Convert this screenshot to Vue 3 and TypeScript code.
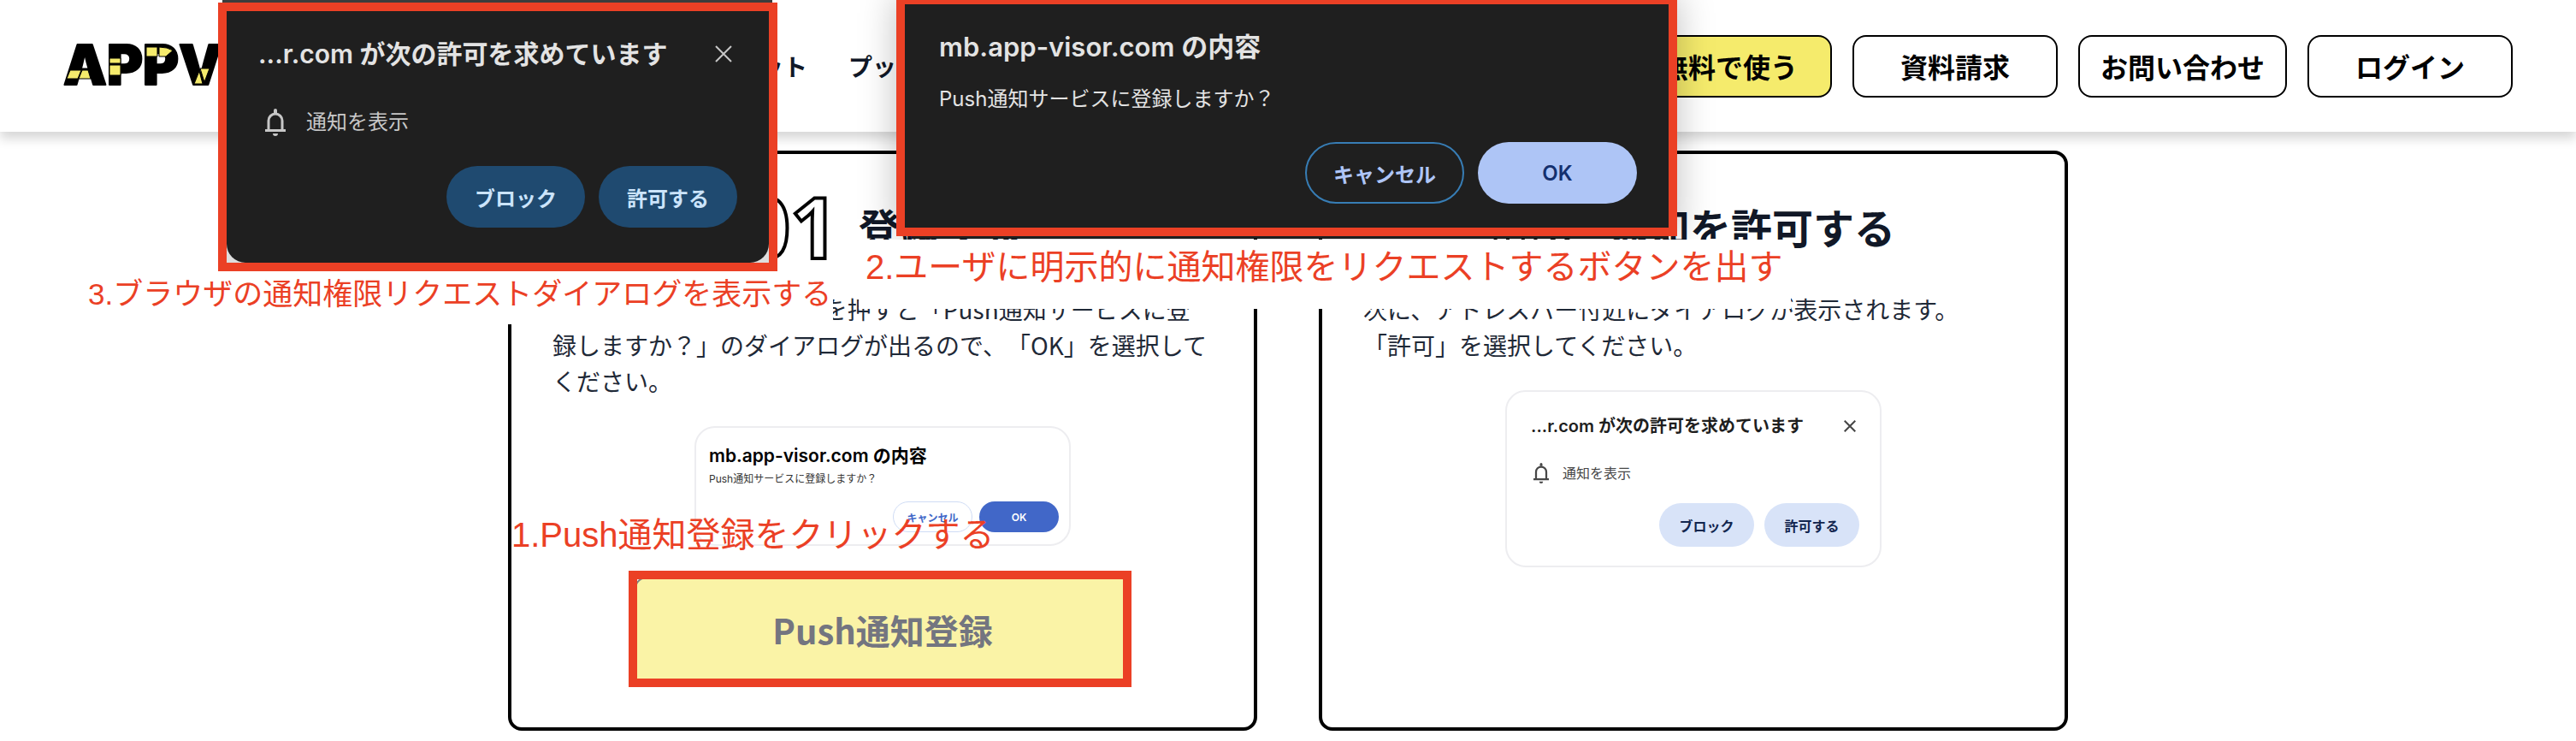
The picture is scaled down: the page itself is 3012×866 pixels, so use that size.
<script setup lang="ts">
interface NavItem {
  label: string
  href: string
}

interface HeaderAction extends NavItem {
  primary?: boolean
}

const navItems: NavItem[] = [
  { label: 'メリット', href: '#merit' },
  { label: 'プッシュ通知', href: '#push' },
]

const actions: HeaderAction[] = [
  { label: '無料で使う', href: '#free', primary: true },
  { label: '資料請求', href: '#document' },
  { label: 'お問い合わせ', href: '#contact' },
  { label: 'ログイン', href: '#login' },
]
</script>

<template>
  <div class="page">
    <header class="site-header">
      <a class="logo" href="#top" aria-label="APPVISOR">
        <svg width="344" height="56" viewBox="0 0 344 56" aria-hidden="true">
          <text x="0" y="50" class="logo-text">APPVISOR</text>
          <g fill="#f5eb6c" stroke="#000" stroke-width="1">
            <path d="M8 33h13l-4 10H4z" />
            <path d="M22 33h7l3 10H18z" />
            <path d="M54 19h13v6H54z" />
            <path d="M54 27h13v12H54z" />
            <path d="M97 6h13v11H97z" />
            <path d="M112 6q10 0 16 4l-8 7h-8z" />
            <path d="M153 49l6-15 4 15z" />
            <path d="M160 31h11l-6 16z" />
          </g>
        </svg>
      </a>
      <nav class="nav" aria-label="メイン">
        <a v-for="item in navItems" :key="item.label" :href="item.href">{{ item.label }}</a>
      </nav>
      <div class="actions">
        <a
          v-for="action in actions"
          :key="action.label"
          class="action"
          :class="{ primary: action.primary }"
          :href="action.href"
        >{{ action.label }}</a>
      </div>
    </header>

    <main class="steps">
      <section class="card">
        <h2 class="card-head"><span class="number">01</span><span>登録する</span></h2>
        <p class="card-text">「Push通知登録」ボタンを押すと「Push通知サービスに登録しますか？」のダイアログが出るので、「OK」を選択してください。</p>
        <div class="mini mini-confirm">
          <p class="mini-title">mb.app-visor.com の内容</p>
          <p class="mini-message">Push通知サービスに登録しますか？</p>
          <div class="mini-buttons">
            <button type="button" class="mini-cancel">キャンセル</button>
            <button type="button" class="mini-ok">OK</button>
          </div>
        </div>
        <div class="register">
          <button type="button" class="register-button">Push通知登録</button>
          <span class="mark"></span>
        </div>
        <p class="note note-one">1.Push通知登録をクリックする</p>
      </section>

      <section class="card">
        <h2 class="card-head"><span class="number">02</span><span>通知を許可する</span></h2>
        <p class="card-text">次に、アドレスバー付近にダイアログが表示されます。<br />「許可」を選択してください。</p>
        <div class="mini mini-permission">
          <div class="mini-row">
            <p class="mini-title">...r.com が次の許可を求めています</p>
            <button type="button" class="close" aria-label="閉じる">
              <svg width="14" height="14" viewBox="0 0 20 20"><path d="M1 1l18 18M19 1L1 19" fill="none" stroke="currentColor" stroke-width="3" /></svg>
            </button>
          </div>
          <p class="request">
            <svg width="18" height="24" viewBox="0 0 24 32" aria-hidden="true">
              <path d="M0 24h24v3H0z" fill="currentColor" />
              <path d="M4 25V14a8 8 0 0 1 16 0v11" fill="none" stroke="currentColor" stroke-width="3" />
              <path d="M10 5V2a2 2 0 0 1 4 0v3zM9 29h6a3 3 0 0 1-6 0z" fill="currentColor" />
            </svg>
            <span>通知を表示</span>
          </p>
          <div class="mini-buttons">
            <button type="button">ブロック</button>
            <button type="button">許可する</button>
          </div>
        </div>
      </section>
    </main>

    <section class="dialog confirm" aria-label="登録の確認">
      <p class="dialog-title">mb.app-visor.com の内容</p>
      <p class="dialog-message">Push通知サービスに登録しますか？</p>
      <div class="dialog-buttons">
        <button type="button" class="cancel">キャンセル</button>
        <button type="button" class="ok">OK</button>
      </div>
    </section>

    <section class="dialog permission" aria-label="通知の許可">
      <div class="dialog-body">
        <div class="dialog-row">
          <p class="dialog-title">...r.com が次の許可を求めています</p>
          <button type="button" class="close" aria-label="閉じる">
            <svg width="20" height="20" viewBox="0 0 20 20"><path d="M1 1l18 18M19 1L1 19" fill="none" stroke="currentColor" stroke-width="2" /></svg>
          </button>
        </div>
        <p class="request">
          <svg width="24" height="32" viewBox="0 0 24 32" aria-hidden="true">
            <path d="M0 24h24v3H0z" fill="currentColor" />
            <path d="M4 25V14a8 8 0 0 1 16 0v11" fill="none" stroke="currentColor" stroke-width="3" />
            <path d="M10 5V2a2 2 0 0 1 4 0v3zM9 29h6a3 3 0 0 1-6 0z" fill="currentColor" />
          </svg>
          <span>通知を表示</span>
        </p>
        <div class="dialog-buttons">
          <button type="button">ブロック</button>
          <button type="button">許可する</button>
        </div>
      </div>
    </section>

    <p class="note note-two">2.ユーザに明示的に通知権限をリクエストするボタンを出す</p>
    <p class="note note-three">3.ブラウザの通知権限リクエストダイアログを表示する</p>
  </div>
</template>

<style>
body {
  margin: 0;
  background: #fff;
}
</style>

<style scoped>
.page {
  position: relative;
  overflow: hidden;
  padding-bottom: 12px;
  color: #111827;
  font-family: "Noto Sans CJK JP", sans-serif;
  text-spacing-trim: space-all;
}

.page * {
  box-sizing: border-box;
}

p,
h2 {
  margin: 0;
}

a {
  color: inherit;
  text-decoration: none;
}

button {
  padding: 0;
  border: 0;
  background: none;
  color: inherit;
  font: inherit;
  cursor: pointer;
}

svg {
  display: block;
}

.site-header {
  display: flex;
  align-items: center;
  height: 154px;
  padding: 0 74px;
  box-shadow: 0 8px 12px rgba(0, 0, 0, 0.16);
}

.logo-text {
  font-family: Inter, sans-serif;
  font-size: 64px;
  font-weight: 900;
  fill: #000;
  stroke: #000;
  stroke-width: 2px;
  stroke-linejoin: round;
}

.nav {
  display: flex;
  gap: 48px;
  margin-left: 414px;
  font-size: 28px;
  font-weight: 700;
  white-space: nowrap;
}

.actions {
  display: flex;
  gap: 24px;
  margin-left: auto;
}

.action {
  display: flex;
  align-items: center;
  justify-content: center;
  min-width: 240px;
  height: 73px;
  padding: 0 24px;
  border: 2px solid #000;
  border-radius: 16px;
  color: #000;
  font-size: 32px;
  font-weight: 700;
  white-space: nowrap;
}

.action.primary {
  background: #f5eb6c;
}

.steps {
  display: grid;
  grid-template-columns: repeat(2, minmax(0, 1fr));
  gap: 72px;
  max-width: 1824px;
  margin: 22px auto 0;
}

.card {
  position: relative;
  display: flex;
  flex-direction: column;
  align-items: center;
  padding: 44px 48px 48px;
  border: 4px solid #000;
  border-radius: 16px;
}

.card-head {
  display: flex;
  align-items: center;
  gap: 24px;
  height: 80px;
  font-size: 48px;
  font-weight: 700;
  line-height: 72px;
  white-space: nowrap;
}

.number {
  color: #fff;
  font-family: "Open Sans", sans-serif;
  font-size: 98px;
  -webkit-text-stroke: 4px #000;
}

.card-text {
  align-self: stretch;
  margin-top: 36px;
  color: #1f2937;
  font-size: 28px;
  line-height: 42px;
}

.mini {
  width: 440px;
  max-width: 100%;
  margin-top: 32px;
  border: 2px solid #ededf0;
  border-radius: 24px;
  font-family: Inter, "Noto Sans CJK JP", sans-serif;
}

.mini-title {
  color: #1f1f1f;
  font-size: 20px;
  font-weight: 600;
  line-height: 30px;
  white-space: nowrap;
}

.mini-confirm {
  padding: 18px 12px 14px 15px;
}

.mini-confirm .mini-title {
  color: #000;
  font-size: 21px;
}

.mini-message {
  color: #333;
  font-size: 12px;
  line-height: 24px;
}

.mini-buttons {
  display: flex;
  justify-content: flex-end;
  gap: 8px;
}

.mini-confirm .mini-buttons {
  margin-top: 14px;
}

.mini-confirm button {
  width: 93px;
  height: 36px;
  border-radius: 18px;
  font-size: 12px;
  font-weight: 600;
}

.mini-confirm .mini-cancel {
  border: 1px solid #cfdcf5;
  color: #4167c8;
}

.mini-confirm .mini-ok {
  background: #4167c8;
  color: #fff;
}

.mini-permission {
  padding: 25px 24px 22px 28px;
}

.mini-row,
.dialog-row {
  display: flex;
  align-items: center;
  justify-content: space-between;
}

.mini-permission .close {
  margin-right: 4px;
  color: #474747;
}

.request {
  display: flex;
  align-items: center;
}

.mini-permission .request {
  gap: 16px;
  margin: 26px 0 21px 3px;
  color: #474747;
  font-size: 16px;
  line-height: 28px;
}

.mini-permission .mini-buttons {
  gap: 12px;
}

.mini-permission .mini-buttons button {
  width: 111px;
  height: 51px;
  border-radius: 26px;
  background: #d8e3f8;
  color: #13264f;
  font-size: 16px;
  font-weight: 600;
}

.register {
  position: relative;
  width: 580px;
  max-width: 100%;
  margin-top: 36px;
}

.register-button {
  width: 100%;
  height: 128px;
  padding-bottom: 4px;
  border: 2px solid #7f8080;
  border-radius: 14px;
  background: #faf3a6;
  color: #737580;
  font-size: 40px;
  font-weight: 700;
}

.mark {
  position: absolute;
  inset: -7px -1px -1px -7px;
  border: 10px solid #eb4025;
  pointer-events: none;
}

.dialog {
  position: absolute;
  border: 10px solid #eb4025;
  color: #e3e3e3;
  font-family: Inter, "Noto Sans CJK JP", sans-serif;
}

.dialog-title {
  font-size: 30px;
  font-weight: 600;
  line-height: 44px;
  white-space: nowrap;
}

.dialog-buttons {
  display: flex;
  justify-content: flex-end;
  gap: 16px;
}

.dialog-buttons button {
  height: 72px;
  border-radius: 36px;
  font-size: 24px;
  font-weight: 600;
}

.permission {
  top: 3px;
  left: 255px;
  width: 654px;
  height: 314px;
  background: #dedede;
}

.permission::before {
  content: "";
  position: absolute;
  top: -13px;
  left: -5px;
  right: -4px;
  height: 3px;
  background: #3c3c3c;
}

.dialog-body {
  height: 100%;
  padding: 28px 37px 0;
  border-radius: 0 0 22px 22px;
  background: #1f1f1f;
}

.permission .close {
  margin-right: 6px;
  color: #c7c7c7;
}

.permission .request {
  gap: 24px;
  margin: 40px 0 33px 8px;
  color: #c7c7c7;
  font-size: 24px;
  line-height: 36px;
}

.permission .dialog-buttons button {
  width: 162px;
  background: #1f4a70;
  color: #cbe4fb;
}

.confirm {
  top: -5px;
  left: 1048px;
  width: 913px;
  height: 281px;
  padding: 28px 37px 0 40px;
  background: #1f1f1f;
  box-shadow: 0 0 40px rgba(0, 0, 0, 0.25);
}

.confirm::after {
  content: "";
  position: absolute;
  right: 0;
  bottom: -13px;
  left: 8px;
  height: 3px;
  background: #1f1f1f;
}

.confirm .dialog-title {
  font-size: 31px;
}

.dialog-message {
  margin-top: 21px;
  font-size: 24px;
  line-height: 36px;
}

.confirm .dialog-buttons {
  margin-top: 32px;
}

.confirm .dialog-buttons button {
  width: 186px;
}

.confirm .cancel {
  border: 2px solid #377db5;
  color: #aec5f6;
}

.confirm .ok {
  background: #aec5f6;
  color: #14306e;
}

.note {
  position: absolute;
  color: #eb4025;
  font-family: "Liberation Sans", "Noto Sans CJK JP", sans-serif;
  font-size: 40px;
  line-height: 60px;
  white-space: nowrap;
}

.note-one {
  top: 415px;
  left: 0;
}

.note-two {
  top: 280px;
  left: 1004px;
  width: 1090px;
  height: 81px;
  padding: 2px 8px 0;
  background: #fff;
}

.note-three {
  top: 317px;
  left: 95px;
  width: 879px;
  height: 62px;
  padding: 0 8px;
  background: #fff;
  font-size: 35px;
  line-height: 54px;
}
</style>
